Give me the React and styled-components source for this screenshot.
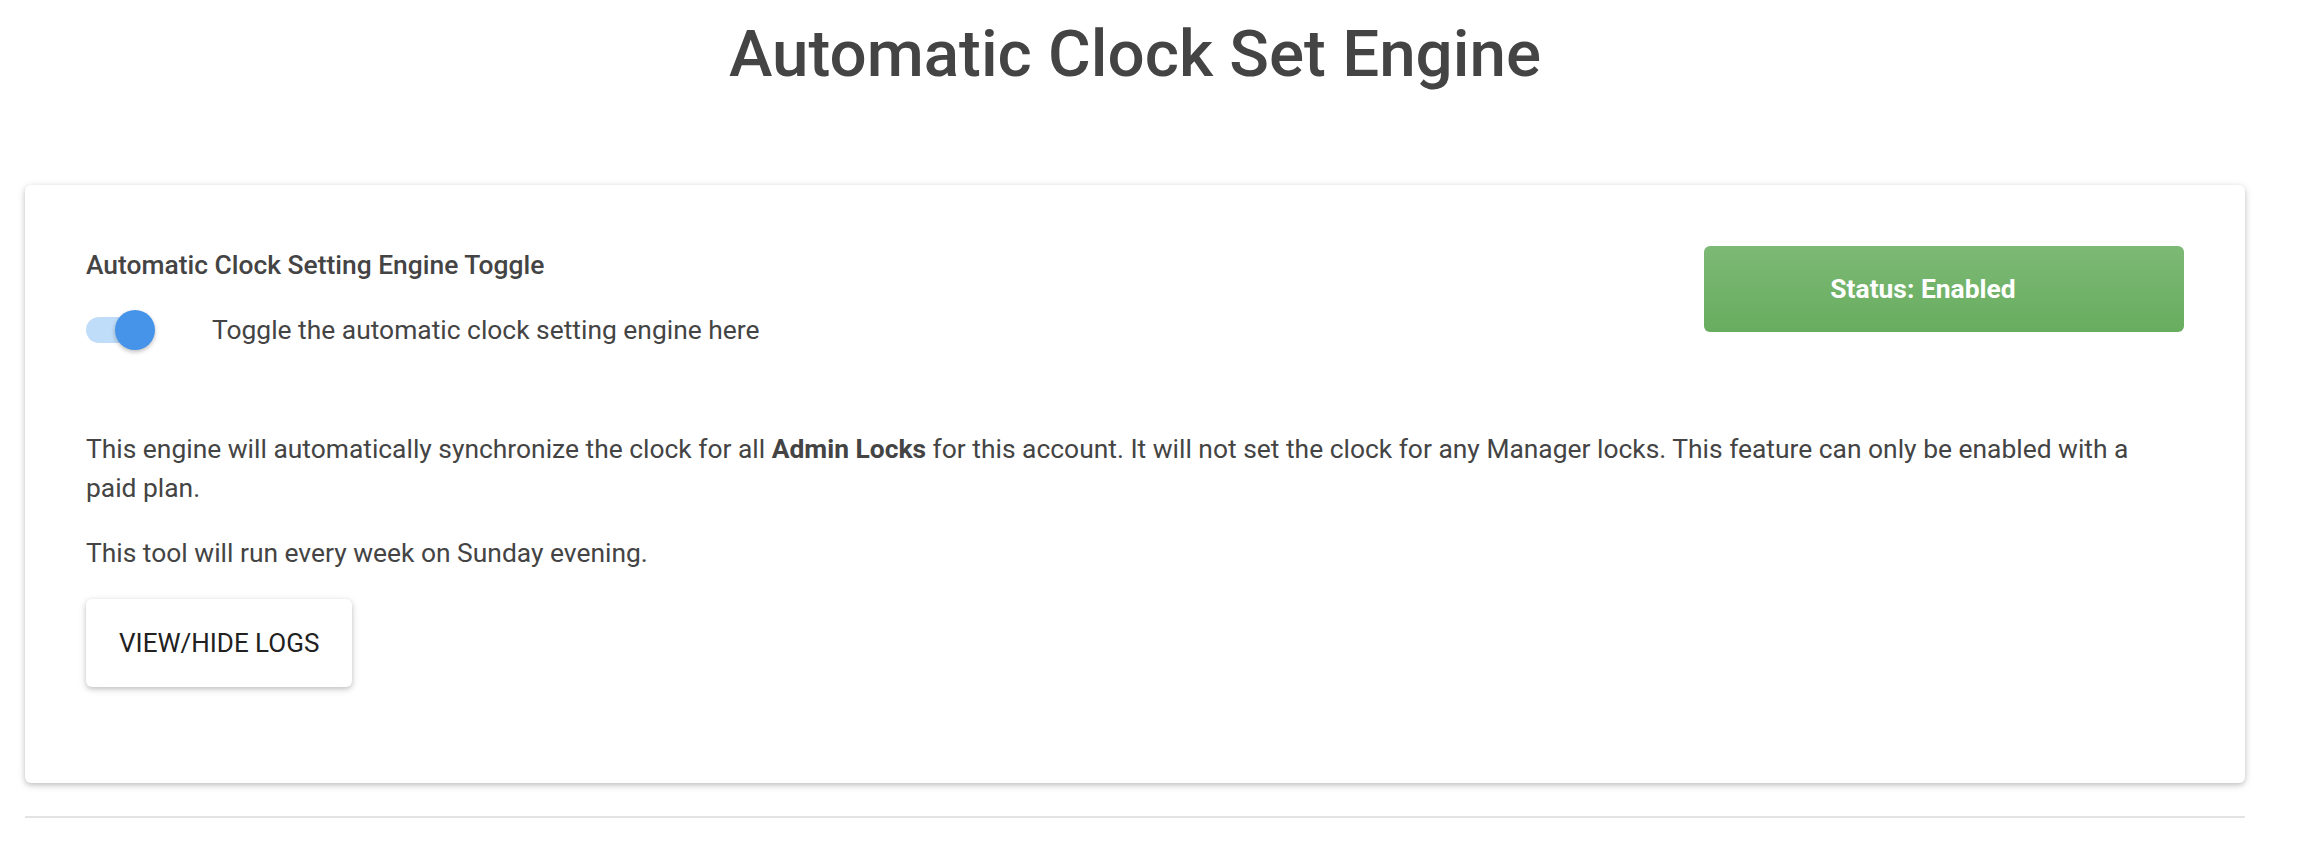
import React, { useState } from 'react'
import styled, { createGlobalStyle } from 'styled-components'

const GlobalStyle = createGlobalStyle`
  body {
    margin: 0;
    background: #fff;
    font-family: Roboto, "Liberation Sans", sans-serif;
    color: #444;
  }
`

const Page = styled.div`
  width: 2220px;
  padding: 0 0 0 25px;
`

const Title = styled.h1`
  margin: 0;
  padding-top: 4px;
  height: 181px;
  text-align: center;
  font-size: 65.5px;
  font-weight: 500;
  line-height: 100px;
  color: #444;
`

const Card = styled.div`
  background: #fff;
  border-radius: 6px;
  box-shadow: 0 2px 5px rgba(0, 0, 0, 0.16), 0 2px 10px rgba(0, 0, 0, 0.12);
  padding: 61px 61px 96px;
  font-size: 26.4px;
  line-height: 39px;
`

const Header = styled.div`
  display: flex;
  justify-content: space-between;
  align-items: flex-start;
  margin-bottom: 80px;
`

const Label = styled.div`
  font-weight: 500;
  color: #444;
  margin-bottom: 25px;
`

const ToggleRow = styled.label`
  display: flex;
  align-items: center;
  gap: 58px;
  height: 40px;
  cursor: pointer;
`

const Track = styled.span`
  position: relative;
  display: inline-block;
  width: 68px;
  height: 26px;
  border-radius: 13px;
  background: ${p => (p.$on ? '#bfdcf8' : '#ccc')};
`

const Thumb = styled.span`
  position: absolute;
  top: -7px;
  left: ${p => (p.$on ? '29px' : '-2px')};
  width: 40px;
  height: 40px;
  border-radius: 50%;
  background: ${p => (p.$on ? '#4594e9' : '#f1f1f1')};
  box-shadow: 0 2px 4px rgba(0, 0, 0, 0.25);
  transition: left 0.2s;
`

const StatusBadge = styled.div`
  box-sizing: border-box;
  width: 480px;
  height: 86px;
  padding-right: 42px;
  display: flex;
  align-items: center;
  justify-content: center;
  border-radius: 6px;
  background: ${p => (p.$on
    ? 'linear-gradient(180deg, #7cb975 0%, #68ad5f 100%)'
    : 'linear-gradient(180deg, #e57373 0%, #d9534f 100%)')};
  color: #fff;
  font-weight: 700;
  font-size: 26.4px;
`

const Text = styled.p`
  margin: 0 0 26px;
  color: #444;
`

const LogsButton = styled.button`
  height: 88px;
  padding: 0 33px;
  border: none;
  border-radius: 6px;
  background: #fff;
  color: #212121;
  font-family: Roboto, "Liberation Sans", sans-serif;
  font-size: 26px;
  text-transform: uppercase;
  box-shadow: 0 2px 5px rgba(0, 0, 0, 0.18), 0 2px 10px rgba(0, 0, 0, 0.1);
  cursor: pointer;
`

const Divider = styled.hr`
  margin: 33px 0 0;
  border: none;
  border-top: 2px solid #e3e3e3;
`

const App = () => {
  const [enabled, setEnabled] = useState(true)
  const [showLogs, setShowLogs] = useState(false)
  return (
    <Page>
      <GlobalStyle />
      <Title>Automatic Clock Set Engine</Title>
      <Card>
        <Header>
          <div>
            <Label>Automatic Clock Setting Engine Toggle</Label>
            <ToggleRow onClick={() => setEnabled(!enabled)}>
              <Track $on={enabled}>
                <Thumb $on={enabled} />
              </Track>
              <span>Toggle the automatic clock setting engine here</span>
            </ToggleRow>
          </div>
          <StatusBadge $on={enabled}>Status: {enabled ? 'Enabled' : 'Disabled'}</StatusBadge>
        </Header>
        <Text>
          This engine will automatically synchronize the clock for all <b>Admin Locks</b> for this account. It will not set the clock for any Manager locks. This feature can only be enabled with a paid plan.
        </Text>
        <Text>This tool will run every week on Sunday evening.</Text>
        <LogsButton onClick={() => setShowLogs(!showLogs)}>View/Hide Logs</LogsButton>
      </Card>
      <Divider />
    </Page>
  )
}

export default App
